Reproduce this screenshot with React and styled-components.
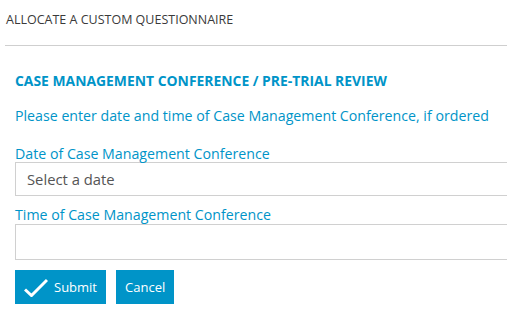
import React from "react";
import styled, { createGlobalStyle } from "styled-components";

const Global = createGlobalStyle`
  html, body { margin: 0; padding: 0; background: #fff; }
  body { font-family: "Open Sans", "Noto Sans", sans-serif; overflow: hidden; }
`;

const blue = "#0094c8";

const Page = styled.div`
  width: 507px;
  height: 321px;
  overflow: hidden;
`;

const Header = styled.div`
  box-sizing: border-box;
  height: 46px;
  margin-left: 5px;
  padding: 12px 0 0 1px;
  font-size: 12.5px;
  line-height: 16px;
  color: #3a3a3a;
  border-bottom: 1px solid #cfcfcf;
`;

const Body = styled.div`
  padding: 26px 0 0 15px;
`;

const Title = styled.div`
  font-size: 13.9px;
  font-weight: 700;
  color: ${blue};
  line-height: 18px;
`;

const Intro = styled.div`
  margin-top: 16px;
  font-size: 14.2px;
  color: ${blue};
  line-height: 20px;
`;

const Label = styled.div`
  margin-top: ${(p) => p.$top}px;
  font-size: 14.2px;
  color: ${blue};
  line-height: 18px;
`;

const Field = styled.div`
  box-sizing: border-box;
  height: ${(p) => p.$h}px;
  margin-top: ${(p) => p.$top}px;
  margin-right: -20px;
  border: 1px solid #d0d0d0;
  display: flex;
  align-items: center;
  padding-left: 11px;
  font-size: 14.8px;
  color: #555;
`;

const Buttons = styled.div`
  display: flex;
  gap: 10px;
  margin-top: 10px;
`;

const Button = styled.button`
  height: 34px;
  border: none;
  background: ${blue};
  color: #fff;
  font-family: inherit;
  font-size: 13px;
  display: flex;
  align-items: center;
  gap: 6px;
  padding: 0 9px 0 9px;
  cursor: pointer;
`;

export default function App() {
  return (
    <Page>
      <Global />
      <Header>ALLOCATE A CUSTOM QUESTIONNAIRE</Header>
      <Body>
        <Title>CASE MANAGEMENT CONFERENCE / PRE-TRIAL REVIEW</Title>
        <Intro>Please enter date and time of Case Management Conference, if ordered</Intro>
        <Label $top={19}>Date of Case Management Conference</Label>
        <Field $h={34} $top={-1}>Select a date</Field>
        <Label $top={10}>Time of Case Management Conference</Label>
        <Field $h={36} $top={0} />
        <Buttons>
          <Button>
            <svg width="24" height="20" viewBox="0 0 24 20">
              <path d="M1 12.5 L7.5 18.5 L23 3" fill="none" stroke="#fff" strokeWidth="3" />
            </svg>
            Submit
          </Button>
          <Button>Cancel</Button>
        </Buttons>
      </Body>
    </Page>
  );
}
